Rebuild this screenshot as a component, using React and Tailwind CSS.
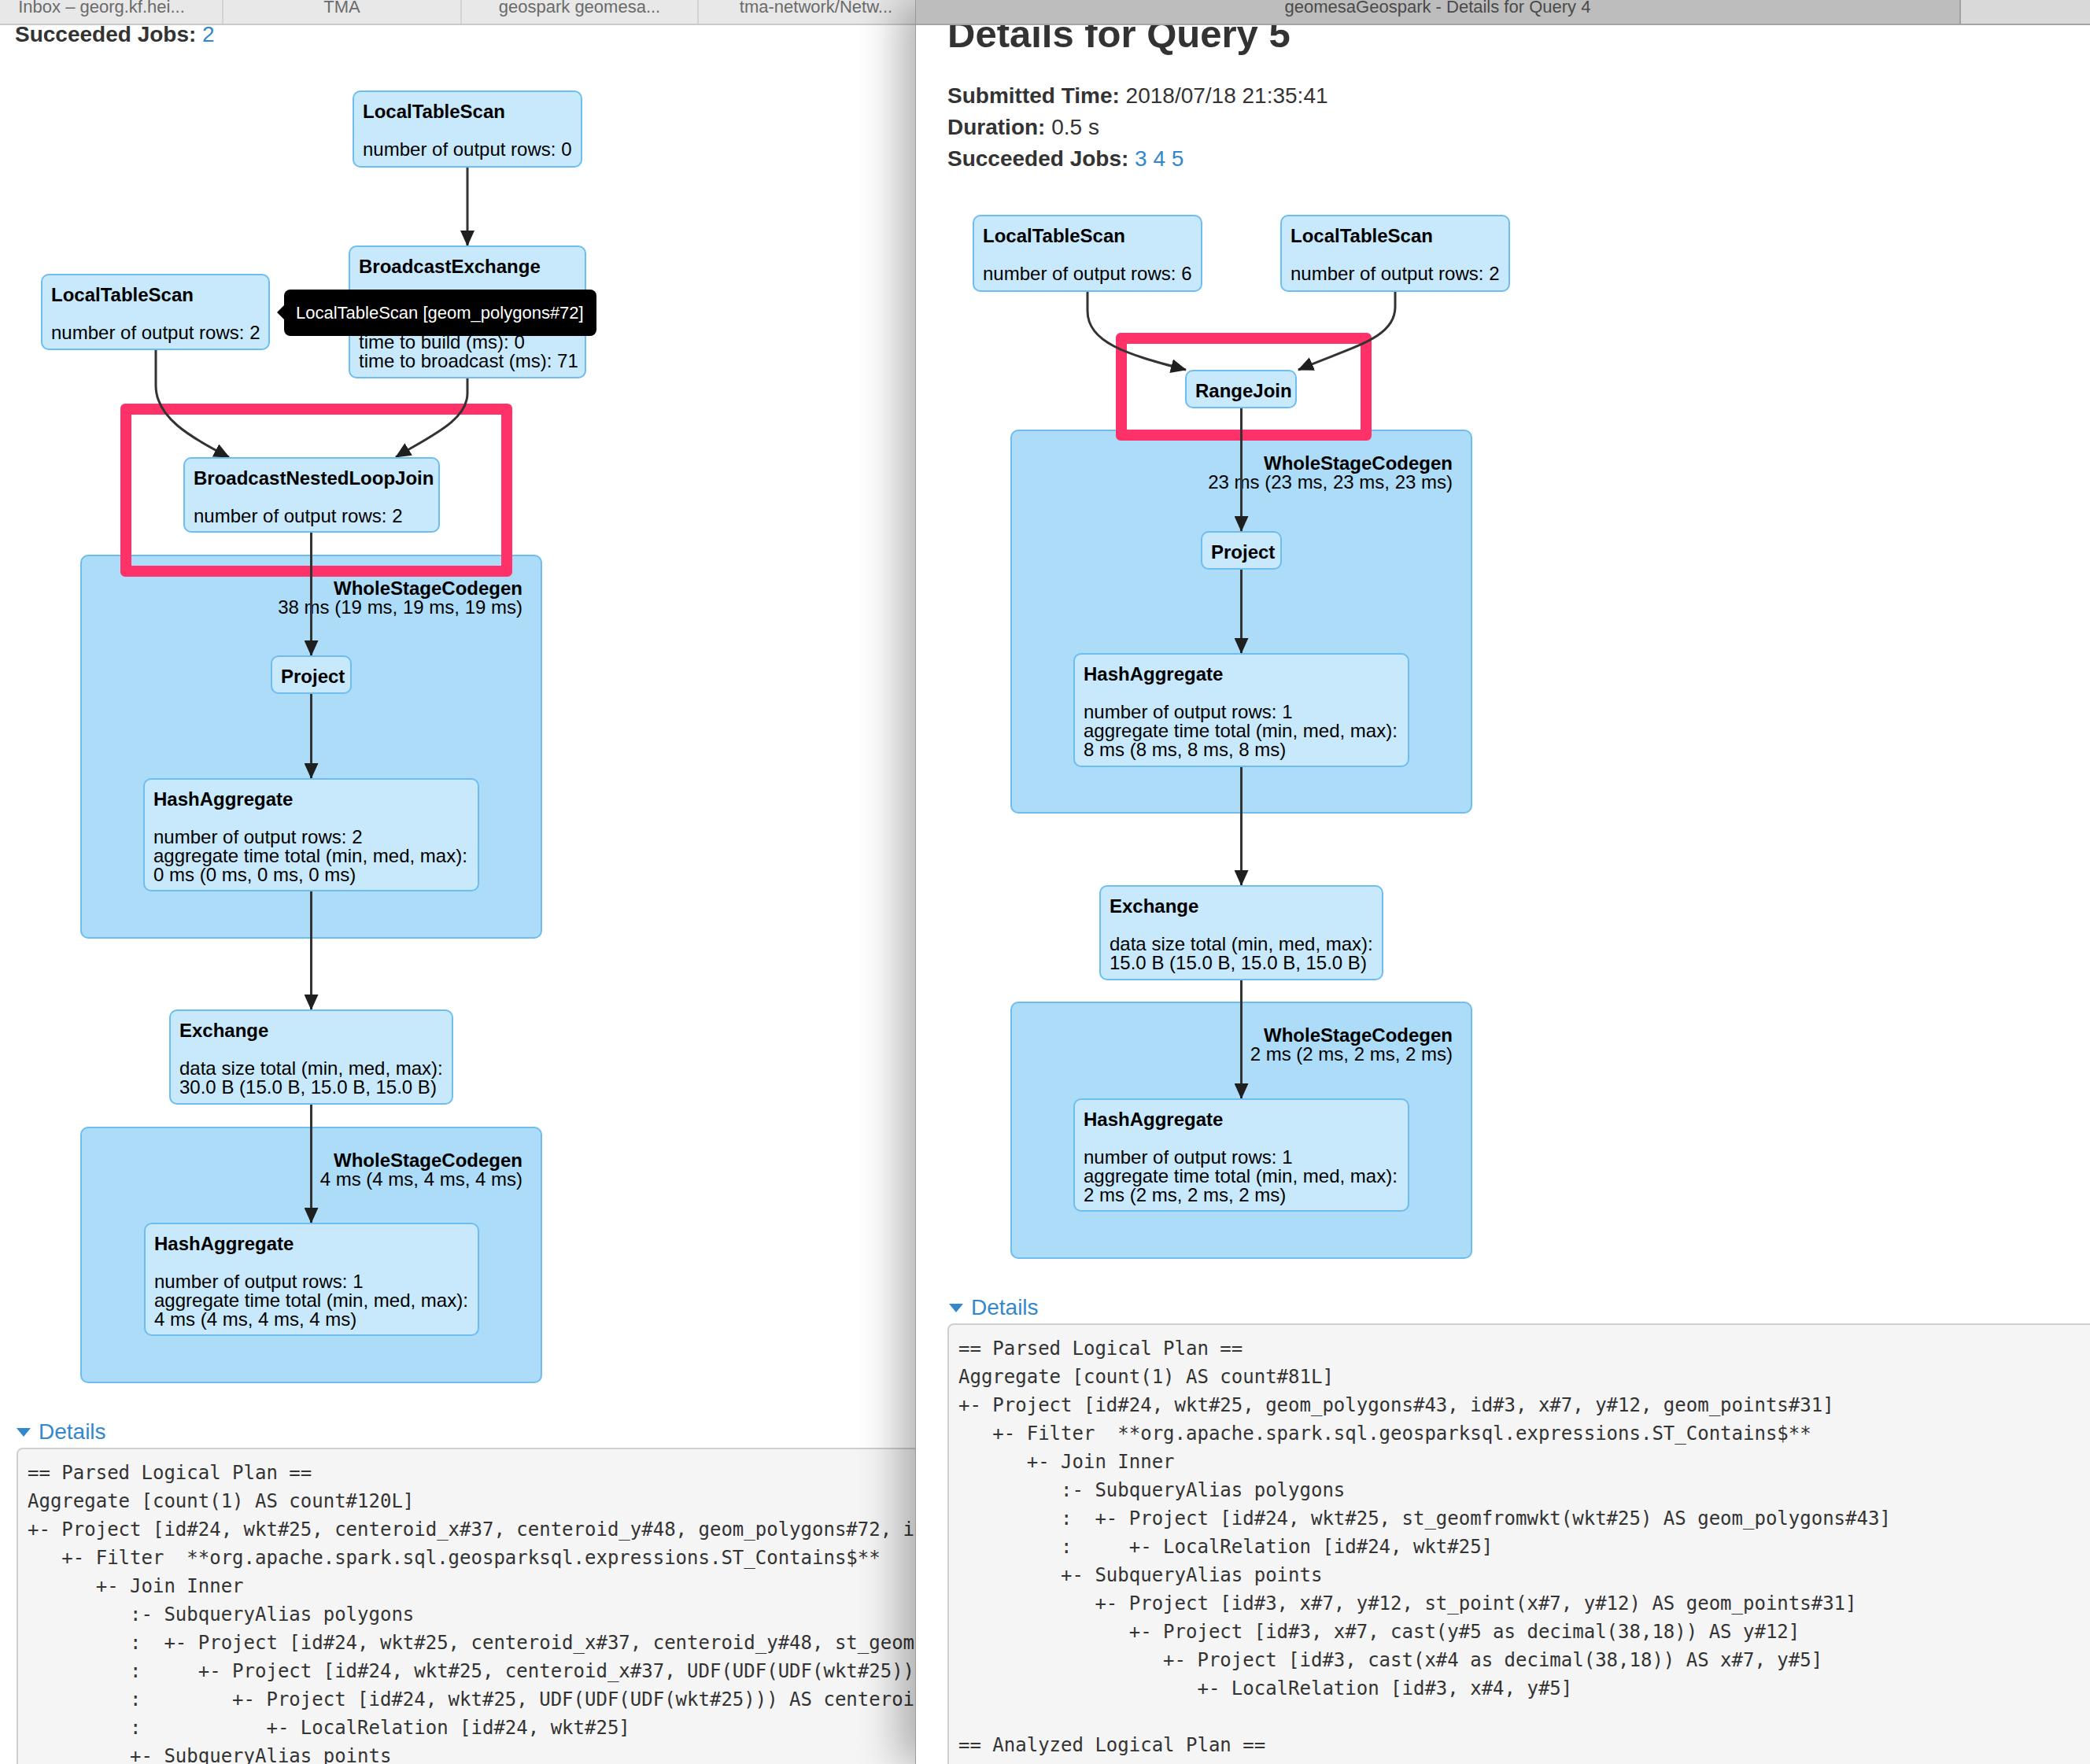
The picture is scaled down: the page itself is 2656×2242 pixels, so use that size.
import React from "react";

function Node({ className, title, lines = [] }) {
  return (
    <div
      className={`absolute rounded-[10px] border-2 border-[#6dbdf0] bg-[#c8e9fc] pl-[11px] pt-[13px] text-[24px] leading-[24px] text-black whitespace-nowrap ${className}`}
    >
      <div className="font-bold">{title}</div>
      {lines.length > 0 && <div className="h-[24px]" />}
      {lines.map((line) => (
        <div key={line}>{line}</div>
      ))}
    </div>
  );
}

function Cluster({ className, time }) {
  return (
    <div
      className={`absolute rounded-[10px] border-2 border-[#6dbdf0] bg-[#acdcf8] pr-[23px] pt-[29px] text-right text-[24px] leading-[24px] text-black whitespace-nowrap ${className}`}
    >
      <div className="font-bold">WholeStageCodegen</div>
      <div>{time}</div>
    </div>
  );
}

function Highlight({ className }) {
  return (
    <div
      className={`absolute rounded-[6px] border-[14px] border-[#ff3169] ${className}`}
    />
  );
}

function Edges({ id, paths }) {
  return (
    <svg className="absolute inset-0 h-full w-full overflow-visible">
      <defs>
        <marker
          id={id}
          viewBox="0 0 20 18"
          refX="19"
          refY="9"
          markerWidth="20"
          markerHeight="18"
          markerUnits="userSpaceOnUse"
          orient="auto"
        >
          <path d="M0,0 L20,9 L0,18 z" fill="#1f1f1f" />
        </marker>
      </defs>
      {paths.map((d) => (
        <path
          key={d}
          d={d}
          fill="none"
          stroke="#333"
          strokeWidth="3"
          markerEnd={`url(#${id})`}
        />
      ))}
    </svg>
  );
}

function DetailsToggle({ className }) {
  return (
    <div
      className={`flex h-[40px] items-center text-[28px] leading-[40px] text-[#3388cc] ${className}`}
    >
      <svg width="18" height="11" viewBox="0 0 18 11" className="mr-[10px]">
        <path d="M0,0 L18,0 L9,11 z" fill="#3388cc" />
      </svg>
      <span>Details</span>
    </div>
  );
}

const leftPlan = `== Parsed Logical Plan ==
Aggregate [count(1) AS count#120L]
+- Project [id#24, wkt#25, centeroid_x#37, centeroid_y#48, geom_polygons#72, id#3, x#7, y#12, geom_points#56]
   +- Filter  **org.apache.spark.sql.geosparksql.expressions.ST_Contains$**
      +- Join Inner
         :- SubqueryAlias polygons
         :  +- Project [id#24, wkt#25, centeroid_x#37, centeroid_y#48, st_geomfromwkt(wkt#25) AS geom_polygons#72]
         :     +- Project [id#24, wkt#25, centeroid_x#37, UDF(UDF(UDF(wkt#25))) AS centeroid_y#48]
         :        +- Project [id#24, wkt#25, UDF(UDF(UDF(wkt#25))) AS centeroid_x#37]
         :           +- LocalRelation [id#24, wkt#25]
         +- SubqueryAlias points
            +- Project [id#3, x#7, y#12, st_point(x#7, y#12) AS geom_points#56]`;

const rightPlan = `== Parsed Logical Plan ==
Aggregate [count(1) AS count#81L]
+- Project [id#24, wkt#25, geom_polygons#43, id#3, x#7, y#12, geom_points#31]
   +- Filter  **org.apache.spark.sql.geosparksql.expressions.ST_Contains$**
      +- Join Inner
         :- SubqueryAlias polygons
         :  +- Project [id#24, wkt#25, st_geomfromwkt(wkt#25) AS geom_polygons#43]
         :     +- LocalRelation [id#24, wkt#25]
         +- SubqueryAlias points
            +- Project [id#3, x#7, y#12, st_point(x#7, y#12) AS geom_points#31]
               +- Project [id#3, x#7, cast(y#5 as decimal(38,18)) AS y#12]
                  +- Project [id#3, cast(x#4 as decimal(38,18)) AS x#7, y#5]
                     +- LocalRelation [id#3, x#4, y#5]

== Analyzed Logical Plan ==`;

function LeftWindow() {
  return (
    <div className="flex h-full w-[1163px] shrink-0 flex-col overflow-hidden bg-white">
      <div className="flex h-[32px] shrink-0 border-b-2 border-[#cacaca] bg-[#e8e8e8] text-[22px] leading-[18px] text-[#6b6b6b]">
        <div className="w-[282px] shrink-0 pr-[24px] text-center">
          Inbox – georg.kf.hei...
        </div>
        <div className="w-[303px] shrink-0 border-l-2 border-[#d3d3d3] text-center">
          TMA
        </div>
        <div className="w-[301px] shrink-0 border-l-2 border-[#d3d3d3] text-center">
          geospark geomesa...
        </div>
        <div className="w-[300px] shrink-0 border-l-2 border-[#d3d3d3] text-center">
          tma-network/Netw...
        </div>
      </div>

      <div className="flex-1 overflow-hidden">
        <div className="-mt-[8px] pl-[19px] text-[28px] leading-[40px] text-[#333]">
          <b>Succeeded Jobs:</b> <span className="text-[#3388cc]">2</span>
        </div>

        <div className="relative h-[1736px]">
          <Cluster className="left-[102px] top-[641px] w-[587px] h-[488px]" time="38 ms (19 ms, 19 ms, 19 ms)" />
          <Cluster className="left-[102px] top-[1368px] w-[587px] h-[326px]" time="4 ms (4 ms, 4 ms, 4 ms)" />
          <Highlight className="left-[153px] top-[449px] w-[498px] h-[220px]" />
          <Edges
            id="arrow-left"
            paths={[
              "M594,149 L594,248",
              "M198,381 L198,426 C198,466 240,491 291,517",
              "M594,417 L594,436 C594,471 545,491 503,517",
              "M395.5,613 L395.5,769",
              "M395.5,818 L395.5,925",
              "M395.5,1069 L395.5,1219",
              "M395.5,1340 L395.5,1490",
            ]}
          />
          <Node className="left-[448px] top-[51px] w-[292px] h-[98px]" title="LocalTableScan" lines={["number of output rows: 0"]} />
          <Node
            className="left-[443px] top-[248px] w-[302px] h-[169px]"
            title="BroadcastExchange"
            lines={[
              "data size (bytes): 168",
              "time to collect (ms): 19",
              "time to build (ms): 0",
              "time to broadcast (ms): 71",
            ]}
          />
          <Node className="left-[52px] top-[284px] w-[291px] h-[97px]" title="LocalTableScan" lines={["number of output rows: 2"]} />
          <Node className="left-[233px] top-[517px] w-[326px] h-[96px]" title="BroadcastNestedLoopJoin" lines={["number of output rows: 2"]} />
          <Node className="left-[344px] top-[769px] w-[103px] h-[49px]" title="Project" />
          <Node
            className="left-[182px] top-[925px] w-[427px] h-[144px]"
            title="HashAggregate"
            lines={[
              "number of output rows: 2",
              "aggregate time total (min, med, max):",
              "0 ms (0 ms, 0 ms, 0 ms)",
            ]}
          />
          <Node
            className="left-[215px] top-[1219px] w-[361px] h-[121px]"
            title="Exchange"
            lines={[
              "data size total (min, med, max):",
              "30.0 B (15.0 B, 15.0 B, 15.0 B)",
            ]}
          />
          <Node
            className="left-[183px] top-[1490px] w-[426px] h-[144px]"
            title="HashAggregate"
            lines={[
              "number of output rows: 1",
              "aggregate time total (min, med, max):",
              "4 ms (4 ms, 4 ms, 4 ms)",
            ]}
          />
          <div className="absolute left-[361px] top-[304px] flex h-[59px] w-[397px] items-center rounded-[8px] bg-black pl-[15px] text-[22px] text-white whitespace-nowrap">
            <div className="absolute -left-[9px] top-[19px] h-0 w-0 border-y-[10px] border-r-[10px] border-y-transparent border-r-black" />
            LocalTableScan [geom_polygons#72]
          </div>
        </div>

        <DetailsToggle className="pl-[21px]" />
        <pre className="ml-[21px] w-[1900px] rounded-[8px] border-2 border-[#cfcfcf] bg-[#f5f5f5] p-[12px] font-['DejaVu_Sans_Mono',monospace] text-[24px] leading-[36px] text-[#333]">
          {leftPlan}
        </pre>
      </div>
    </div>
  );
}

function RightWindow() {
  return (
    <div className="relative z-10 flex h-full flex-1 flex-col overflow-hidden border-l border-[#9b9b9b] bg-white shadow-[-20px_0_50px_rgba(0,0,0,0.3)]">
      <div className="flex h-[32px] shrink-0 border-b-2 border-[#a4a4a4] bg-[#bdbdbd] text-[22px] leading-[18px] text-[#4a4a4a]">
        <div className="w-[1326px] shrink-0 text-center">
          geomesaGeospark - Details for Query 4
        </div>
        <div className="flex-1 border-l-2 border-[#a0a0a0] bg-[#d9d9d9]" />
      </div>

      <div className="flex-1 overflow-hidden">
        <h3 className="-mt-[29px] mb-[19px] pl-[40px] text-[49px] font-bold leading-[80px] text-[#333]">
          Details for Query 5
        </h3>
        <div className="pl-[40px] text-[28px] leading-[40px] text-[#333]">
          <div>
            <b>Submitted Time:</b> 2018/07/18 21:35:41
          </div>
          <div>
            <b>Duration:</b> 0.5 s
          </div>
          <div>
            <b>Succeeded Jobs:</b>{" "}
            <span className="text-[#3388cc]">3 4 5</span>
          </div>
        </div>

        <div className="relative h-[1420px]">
          <Cluster className="left-[120px] top-[324px] w-[587px] h-[488px]" time="23 ms (23 ms, 23 ms, 23 ms)" />
          <Cluster className="left-[120px] top-[1051px] w-[587px] h-[327px]" time="2 ms (2 ms, 2 ms, 2 ms)" />
          <Highlight className="left-[254px] top-[201px] w-[325px] h-[137px]" />
          <Edges
            id="arrow-right"
            paths={[
              "M218,149 L218,173 C218,213 266,228 343,248",
              "M609,149 L609,168 C609,208 556,218 486,248",
              "M413.5,297 L413.5,453",
              "M413.5,502 L413.5,608",
              "M413.5,753 L413.5,903",
              "M413.5,1024 L413.5,1174",
            ]}
          />
          <Node className="left-[72px] top-[51px] w-[292px] h-[98px]" title="LocalTableScan" lines={["number of output rows: 6"]} />
          <Node className="left-[463px] top-[51px] w-[292px] h-[98px]" title="LocalTableScan" lines={["number of output rows: 2"]} />
          <Node className="left-[342px] top-[248px] w-[142px] h-[49px]" title="RangeJoin" />
          <Node className="left-[362px] top-[453px] w-[103px] h-[49px]" title="Project" />
          <Node
            className="left-[200px] top-[608px] w-[427px] h-[145px]"
            title="HashAggregate"
            lines={[
              "number of output rows: 1",
              "aggregate time total (min, med, max):",
              "8 ms (8 ms, 8 ms, 8 ms)",
            ]}
          />
          <Node
            className="left-[233px] top-[903px] w-[361px] h-[121px]"
            title="Exchange"
            lines={[
              "data size total (min, med, max):",
              "15.0 B (15.0 B, 15.0 B, 15.0 B)",
            ]}
          />
          <Node
            className="left-[200px] top-[1174px] w-[427px] h-[144px]"
            title="HashAggregate"
            lines={[
              "number of output rows: 1",
              "aggregate time total (min, med, max):",
              "2 ms (2 ms, 2 ms, 2 ms)",
            ]}
          />
        </div>

        <DetailsToggle className="pl-[42px]" />
        <pre className="ml-[40px] w-[1700px] rounded-[8px] border-2 border-[#cfcfcf] bg-[#f5f5f5] p-[12px] font-['DejaVu_Sans_Mono',monospace] text-[24px] leading-[36px] text-[#333]">
          {rightPlan}
        </pre>
      </div>
    </div>
  );
}

export default function App() {
  return (
    <div className="flex h-[2242px] w-[2656px] overflow-hidden bg-white font-['Liberation_Sans',Arial,Helvetica,sans-serif]">
      <LeftWindow />
      <RightWindow />
    </div>
  );
}
